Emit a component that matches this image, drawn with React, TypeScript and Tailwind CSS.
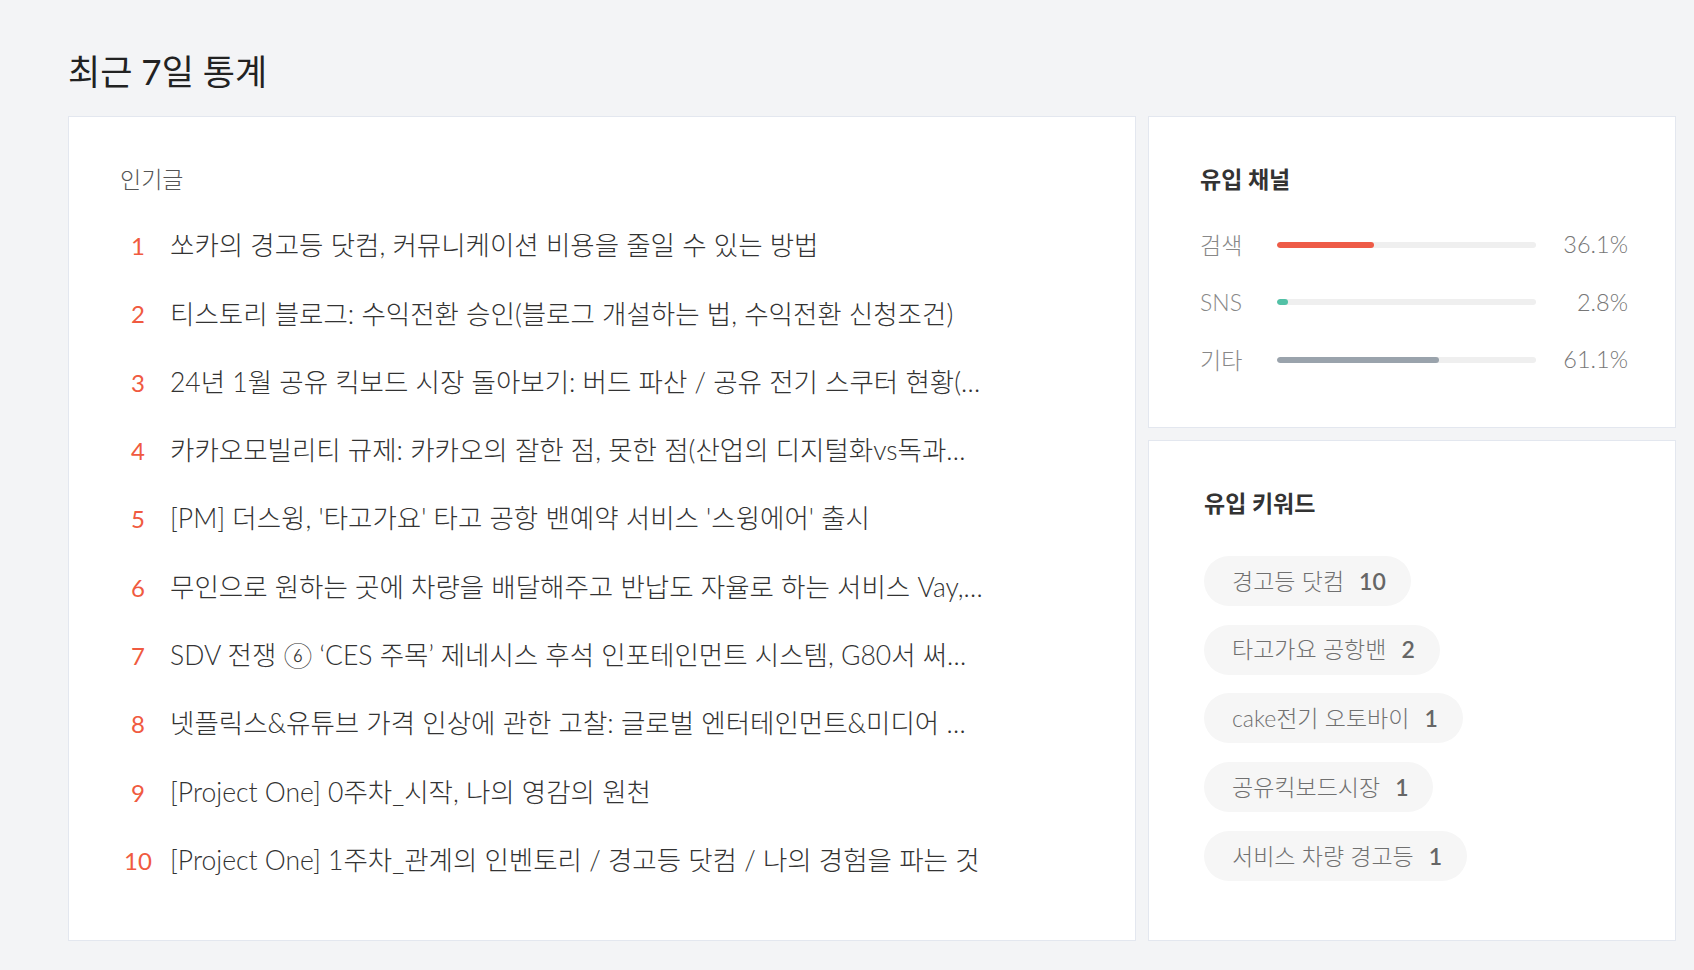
import React from "react";

const posts = [
  "쏘카의 경고등 닷컴, 커뮤니케이션 비용을 줄일 수 있는 방법",
  "티스토리 블로그: 수익전환 승인(블로그 개설하는 법, 수익전환 신청조건)",
  "24년 1월 공유 킥보드 시장 돌아보기: 버드 파산 / 공유 전기 스쿠터 현황(…",
  "카카오모빌리티 규제: 카카오의 잘한 점, 못한 점(산업의 디지털화vs독과…",
  "[PM] 더스윙, '타고가요' 타고 공항 밴예약 서비스 '스윙에어' 출시",
  "무인으로 원하는 곳에 차량을 배달해주고 반납도 자율로 하는 서비스 Vay,…",
  "SDV 전쟁 ⑥ ‘CES 주목’ 제네시스 후석 인포테인먼트 시스템, G80서 써…",
  "넷플릭스&유튜브 가격 인상에 관한 고찰: 글로벌 엔터테인먼트&미디어 …",
  "[Project One] 0주차_시작, 나의 영감의 원천",
  "[Project One] 1주차_관계의 인벤토리 / 경고등 닷컴 / 나의 경험을 파는 것",
];

const channels = [
  { label: "검색", pct: 36.1, color: "bg-[#ee5b47]" },
  { label: "SNS", pct: 2.8, color: "bg-[#52c1a6]" },
  { label: "기타", pct: 61.1, color: "bg-[#9aa3ac]" },
];

const keywords = [
  { k: "경고등 닷컴", n: 10 },
  { k: "타고가요 공항밴", n: 2 },
  { k: "cake전기 오토바이", n: 1 },
  { k: "공유킥보드시장", n: 1 },
  { k: "서비스 차량 경고등", n: 1 },
];

export default function App() {
  return (
    <div
      className="min-h-screen w-full bg-[#f3f4f6] pl-[68px] pr-[18px] text-[#333]"
      style={{ fontFamily: 'Lato, "Noto Sans CJK KR", sans-serif' }}
    >
      <h1 className="h-[116px] pt-[46px] text-[35px] leading-[50px] font-normal text-[#222]">
        최근 7일 통계
      </h1>
      <div className="flex gap-[12px]">
        <div className="w-[1068px] h-[825px] bg-white border border-[#e3e7ef] pl-[51px] pt-[47px]">
          <div className="text-[23px] leading-[30px] font-light text-[#555]">인기글</div>
          <div className="mt-[18px] flex flex-col">
            {posts.map((p, i) => (
              <div key={i} className="h-[68.3px] flex items-center">
                <span className="w-[36px] text-center text-[24px] text-[#f05a40] shrink-0">
                  {i + 1}
                </span>
                <span className="ml-[14px] text-[26.5px] font-light text-[#333] whitespace-nowrap overflow-hidden max-w-[830px]">
                  {p}
                </span>
              </div>
            ))}
          </div>
        </div>
        <div className="w-[528px] flex flex-col gap-[12px]">
          <div className="h-[312px] bg-white border border-[#e3e7ef] pl-[51px] pr-[47px] pt-[47px]">
            <div className="text-[23px] leading-[30px] font-bold text-[#333]">유입 채널</div>
            <div className="mt-[22px] flex flex-col">
              {channels.map((c) => (
                <div key={c.label} className="h-[57.5px] flex items-center">
                  <span className="w-[77px] text-[23px] font-light text-[#888] shrink-0">{c.label}</span>
                  <div className="w-[259px] h-[6px] rounded-full bg-[#efefef] overflow-hidden shrink-0">
                    <div
                      className={`h-full rounded-full ${c.color}`}
                      style={{ width: `calc(${c.pct}% + 4px)` }}
                    />
                  </div>
                  <span className="flex-1 text-right text-[23.5px] font-light text-[#777]">{c.pct}%</span>
                </div>
              ))}
            </div>
          </div>
          <div className="h-[501px] bg-white border border-[#e3e7ef] pl-[55px] pt-[47px]">
            <div className="text-[23px] leading-[30px] font-bold text-[#333]">유입 키워드</div>
            <div className="mt-[38px] flex flex-col items-start gap-[18.7px]">
              {keywords.map((k) => (
                <div
                  key={k.k}
                  className="h-[50px] rounded-full bg-[#f6f6f6] pl-[28px] pr-[25px] flex items-center gap-[15px] text-[23px]"
                >
                  <span className="font-light text-[#707070]">{k.k}</span>
                  <span className="font-semibold text-[#666] text-[23px]">{k.n}</span>
                </div>
              ))}
            </div>
          </div>
        </div>
      </div>
    </div>
  );
}
